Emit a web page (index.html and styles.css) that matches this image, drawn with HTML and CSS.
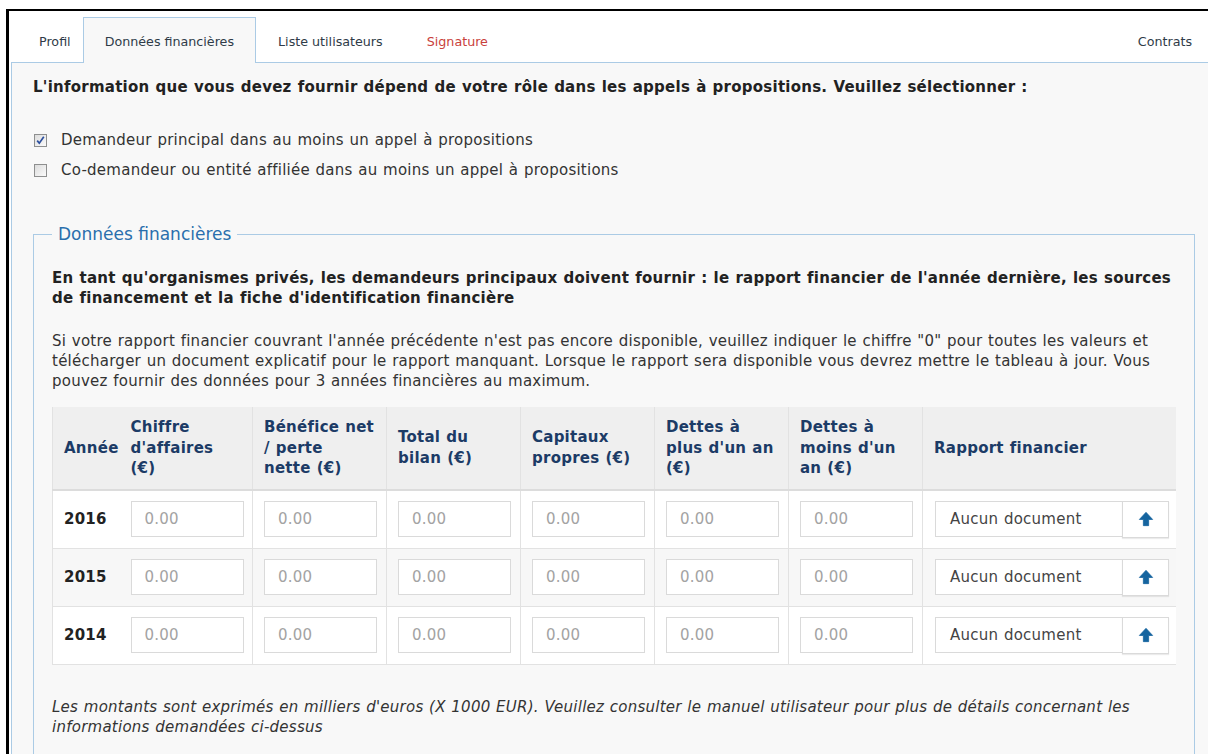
FILE: index.html
```html
<!DOCTYPE html>
<html lang="fr">
<head>
<meta charset="utf-8">
<title>Données financières</title>
<link rel="stylesheet" href="styles.css">
</head>
<body>
<div class="frame">
  <ul class="tabs">
    <li class="tab tab-first">Profil</li>
    <li class="tab active">Données financières</li>
    <li class="tab">Liste utilisateurs</li>
    <li class="tab warn">Signature</li>
    <li class="tab tab-end">Contrats</li>
  </ul>

  <div class="panel">
    <p class="lead">L'information que vous devez fournir dépend de votre rôle dans les appels à propositions. Veuillez sélectionner :</p>

    <label class="check">
      <span class="box"><svg viewBox="0 0 11 11" width="11" height="11"><path d="M2.2 5.6 L4.3 8.2 L8.8 1.8" fill="none" stroke="#2c4f9e" stroke-width="1.7"/></svg></span>
      Demandeur principal dans au moins un appel à propositions
    </label>
    <label class="check">
      <span class="box"></span>
      Co-demandeur ou entité affiliée dans au moins un appel à propositions
    </label>

    <fieldset class="group">
      <legend>Données financières</legend>
      <p class="strong">En tant qu'organismes privés, les demandeurs principaux doivent fournir : le rapport financier de l'année dernière, les sources de financement et la fiche d'identification financière</p>
      <p class="text">Si votre rapport financier couvrant l'année précédente n'est pas encore disponible, veuillez indiquer le chiffre "0" pour toutes les valeurs et télécharger un document explicatif pour le rapport manquant. Lorsque le rapport sera disponible vous devrez mettre le tableau à jour. Vous pouvez fournir des données pour 3 années financières au maximum.</p>

      <table class="fin">
        <colgroup>
          <col class="c-year"><col class="c-first"><col class="c-num"><col class="c-num"><col class="c-num"><col class="c-num"><col class="c-num"><col>
        </colgroup>
        <thead>
          <tr>
            <th>Année</th>
            <th class="nosep">Chiffre<br>d'affaires<br>(€)</th>
            <th>Bénéfice net<br>/ perte<br>nette (€)</th>
            <th>Total du<br>bilan (€)</th>
            <th>Capitaux<br>propres (€)</th>
            <th>Dettes à<br>plus d'un an<br>(€)</th>
            <th>Dettes à<br>moins d'un<br>an (€)</th>
            <th>Rapport financier</th>
          </tr>
        </thead>
        <tbody>
          <tr>
            <td class="year">2016</td>
            <td class="nosep"><input class="field" placeholder="0.00"></td>
            <td><input class="field" placeholder="0.00"></td>
            <td><input class="field" placeholder="0.00"></td>
            <td><input class="field" placeholder="0.00"></td>
            <td><input class="field" placeholder="0.00"></td>
            <td><input class="field" placeholder="0.00"></td>
            <td><div class="file"><span class="file-name">Aucun document</span><button class="upload" type="button"><svg viewBox="0 0 14 14" width="16" height="16"><path d="M7 1.2 L12.8 7.4 L9.3 7.4 L9.3 12.8 L4.7 12.8 L4.7 7.4 L1.2 7.4 Z" fill="#15649f" stroke="#15649f" stroke-width="0.7" stroke-linejoin="round"/></svg></button></div></td>
          </tr>
          <tr>
            <td class="year">2015</td>
            <td class="nosep"><input class="field" placeholder="0.00"></td>
            <td><input class="field" placeholder="0.00"></td>
            <td><input class="field" placeholder="0.00"></td>
            <td><input class="field" placeholder="0.00"></td>
            <td><input class="field" placeholder="0.00"></td>
            <td><input class="field" placeholder="0.00"></td>
            <td><div class="file"><span class="file-name">Aucun document</span><button class="upload" type="button"><svg viewBox="0 0 14 14" width="16" height="16"><path d="M7 1.2 L12.8 7.4 L9.3 7.4 L9.3 12.8 L4.7 12.8 L4.7 7.4 L1.2 7.4 Z" fill="#15649f" stroke="#15649f" stroke-width="0.7" stroke-linejoin="round"/></svg></button></div></td>
          </tr>
          <tr>
            <td class="year">2014</td>
            <td class="nosep"><input class="field" placeholder="0.00"></td>
            <td><input class="field" placeholder="0.00"></td>
            <td><input class="field" placeholder="0.00"></td>
            <td><input class="field" placeholder="0.00"></td>
            <td><input class="field" placeholder="0.00"></td>
            <td><input class="field" placeholder="0.00"></td>
            <td><div class="file"><span class="file-name">Aucun document</span><button class="upload" type="button"><svg viewBox="0 0 14 14" width="16" height="16"><path d="M7 1.2 L12.8 7.4 L9.3 7.4 L9.3 12.8 L4.7 12.8 L4.7 7.4 L1.2 7.4 Z" fill="#15649f" stroke="#15649f" stroke-width="0.7" stroke-linejoin="round"/></svg></button></div></td>
          </tr>
        </tbody>
      </table>

      <p class="note">Les montants sont exprimés en milliers d'euros (X 1000 EUR). Veuillez consulter le manuel utilisateur pour plus de détails concernant les informations demandées ci-dessus</p>
    </fieldset>
  </div>
</div>
</body>
</html>
```

FILE: styles.css
```css
* { box-sizing: border-box; }

html, body {
  margin: 0;
  background: #fff;
}

body {
  font-family: "DejaVu Sans", Verdana, sans-serif;
  font-size: 15px;
  letter-spacing: 0.25px;
  word-spacing: 0.6px;
  color: #333;
}

/* outer window edge */
.frame {
  margin: 9px 0 0 6px;
  border-top: 2px solid #000;
  border-left: 3px solid #000;
  height: 745px;
  overflow: hidden;
}

/* tab strip */
.tabs {
  list-style: none;
  margin: 0;
  padding: 0 0 0 8px;
  height: 51px;
  display: flex;
  align-items: flex-end;
}

.tab {
  padding: 3px 21px 0;
  height: 45px;
  line-height: 42px;
  font-size: 12.7px;
  letter-spacing: 0;
  word-spacing: 0;
  color: #2f3b48;
  border: 1px solid transparent;
  border-bottom: 0;
}

.tab-first { padding-right: 11px; }

.tab.active {
  background: #f8f8f8;
  border-color: #abcbe5;
  height: 46px;
  margin-bottom: -1px;
  position: relative;
}

.tab.warn { color: #c9413b; }

.tab-end {
  margin-left: auto;
  padding-right: 15px;
}

/* main panel */
.panel {
  margin-left: 2px;
  background: #f8f8f8;
  border-top: 1px solid #abcbe5;
  border-left: 1px solid #abcbe5;
  padding: 14px 13px 40px 21px;
  height: 700px;
}

.lead {
  margin: 0 0 33px;
  font-weight: bold;
  line-height: 20px;
  color: #222;
}

.check {
  display: flex;
  align-items: center;
  line-height: 20px;
  margin-bottom: 10px;
}

.box {
  width: 13px;
  height: 13px;
  margin: 0 14px 0 1px;
  border: 1px solid #8e8f8f;
  background: linear-gradient(135deg, #dcdcdc, #fbfbfb);
  display: flex;
  align-items: center;
  justify-content: center;
}

/* financial data group */
.group {
  margin: 44px 0 0;
  padding: 24px 18px 20px 18px;
  border: 1px solid #abcbe5;
  min-width: 0;
}

.group legend {
  padding: 0 6px;
  font-size: 17px;
  letter-spacing: 0;
  word-spacing: 0;
  line-height: 20px;
  color: #2a6fad;
}

.strong {
  margin: 0 0 23px;
  font-weight: bold;
  line-height: 20px;
  color: #222;
}

.text {
  margin: 0 0 16px;
  line-height: 20px;
}

.fin {
  width: 100%;
  border-collapse: collapse;
  table-layout: fixed;
  border-left: 1px solid #e2e2e2;
  border-bottom: 1px solid #e2e2e2;
}

.c-year { width: 68px; }
.c-first { width: 132px; }
.c-num { width: 134px; }

.fin th {
  background: #efefef;
  color: #1c3b66;
  font-weight: bold;
  text-align: left;
  line-height: 20.5px;
  padding: 10px 4px 10px 11px;
  border-left: 1px solid #e2e2e2;
  border-bottom: 2px solid #dcdcdc;
}

.fin td {
  padding: 10px 9px 11px 11px;
  border-left: 1px solid #e2e2e2;
  border-top: 1px solid #e2e2e2;
  background: #fff;
}

.fin tbody tr:nth-child(2) td { background: #f7f7f7; }

.fin th.nosep,
.fin td.nosep {
  border-left: 0;
  padding-left: 10px;
}

.fin td.year {
  font-weight: bold;
  color: #222;
}

.field {
  display: block;
  width: 113px;
  height: 36px;
  padding: 0 13px;
  border: 1px solid #dadada;
  background: #fff;
  font: inherit;
  letter-spacing: inherit;
  color: #333;
}

.field::placeholder { color: #a3a3a3; }

.file {
  display: flex;
  height: 36px;
  margin-right: -2px;
  margin-left: 1px;
}

.file-name {
  flex: 1;
  border: 1px solid #dadada;
  border-right: 0;
  background: #fff;
  line-height: 34px;
  padding-left: 14px;
  color: #444;
}

.upload {
  width: 47px;
  height: 37px;
  border: 1px solid #dadada;
  background: #fff;
  box-shadow: 0 1px 1px rgba(0, 0, 0, 0.08);
  display: flex;
  align-items: center;
  justify-content: center;
  padding: 0;
}

.note {
  margin: 32px 0 0;
  font-style: italic;
  line-height: 20px;
}
```
